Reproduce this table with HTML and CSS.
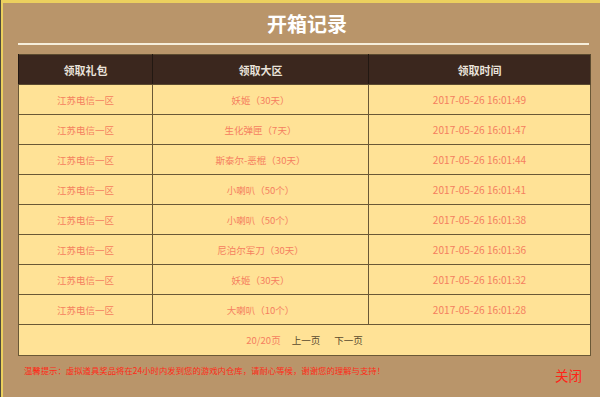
FILE: index.html
```html
<!DOCTYPE html>
<html lang="zh">
<head>
<meta charset="utf-8">
<title>开箱记录</title>
<link rel="stylesheet" href="styles.css">
</head>
<body>
<div class="edge">
  <div class="frame">
    <h1 class="title">开箱记录</h1>
    <div class="rule"></div>
    <table class="records">
      <colgroup><col class="c1"><col class="c2"><col class="c3"></colgroup>
      <thead>
        <tr><th>领取礼包</th><th>领取大区</th><th>领取时间</th></tr>
      </thead>
      <tbody>
        <tr><td>江苏电信一区</td><td>妖姬（30天）</td><td class="time">2017-05-26 16:01:49</td></tr>
        <tr><td>江苏电信一区</td><td>生化弹匣（7天）</td><td class="time">2017-05-26 16:01:47</td></tr>
        <tr><td>江苏电信一区</td><td>斯泰尔-恶棍（30天）</td><td class="time">2017-05-26 16:01:44</td></tr>
        <tr><td>江苏电信一区</td><td>小喇叭（50个）</td><td class="time">2017-05-26 16:01:41</td></tr>
        <tr><td>江苏电信一区</td><td>小喇叭（50个）</td><td class="time">2017-05-26 16:01:38</td></tr>
        <tr><td>江苏电信一区</td><td>尼泊尔军刀（30天）</td><td class="time">2017-05-26 16:01:36</td></tr>
        <tr><td>江苏电信一区</td><td>妖姬（30天）</td><td class="time">2017-05-26 16:01:32</td></tr>
        <tr><td>江苏电信一区</td><td>大喇叭（10个）</td><td class="time">2017-05-26 16:01:28</td></tr>
        <tr class="pager"><td colspan="3"><span class="count">20/20页</span><a class="prev">上一页</a><a class="next">下一页</a></td></tr>
      </tbody>
    </table>
    <div class="footer">
      <p class="note">温馨提示：虚拟道具奖品将在24小时内发到您的游戏内仓库，请耐心等候，谢谢您的理解与支持！</p>
      <a class="close">关闭</a>
    </div>
  </div>
</div>
</body>
</html>
```

FILE: styles.css
```css
html, body {
  margin: 0;
  padding: 0;
  height: 100%;
}
body {
  background: #b9956a;
  font-family: "Noto Sans CJK SC", "Noto Sans", sans-serif;
  overflow: hidden;
}
.edge {
  height: 100%;
  border-left: 1px solid #4e4a3e;
  box-sizing: border-box;
}
.frame {
  height: 100%;
  box-sizing: border-box;
  border-top: 3px solid #ecd05e;
  border-left: 2px solid #ecd05e;
  padding: 7px 10px 0 15px;
  background: #b9956a;
}
.title {
  margin: 0;
  height: 28px;
  line-height: 28px;
  font-size: 20px;
  font-weight: bold;
  color: #ffffff;
  text-align: center;
  padding-left: 6px;
}
.rule {
  height: 2px;
  margin: 5px 1px 0 0;
  background: #f6eedb;
}
.records {
  margin-top: 9px;
  width: 572px;
  border-collapse: collapse;
  table-layout: fixed;
  border: 1px solid #5b4a2f;
}
.c1 { width: 134px; }
.c2 { width: 216px; }
.c3 { width: 222px; }
.records th {
  height: 29px;
  padding: 0;
  background: #3b271e;
  color: #e9e2da;
  font-size: 11px;
  font-weight: bold;
  border-left: 1px solid #221812;
  border-bottom: 1px solid #5b4a2f;
}
.records td {
  height: 29px;
  padding: 0;
  background: #ffe296;
  color: #f5805f;
  font-size: 9.5px;
  text-align: center;
  border: 1px solid #6a5836;
}
.records td.time {
  font-size: 10.1px;
}
.records .pager td {
  height: 30px;
}
.count {
  color: #f5805f;
}
.prev, .next {
  color: #5a4a2e;
  font-size: 9.5px;
}
.prev { margin-left: 11px; }
.next { margin-left: 14px; }
.footer {
  display: flex;
  justify-content: space-between;
  align-items: flex-start;
  padding: 0 8px 0 6px;
}
.note {
  margin: 8px 0 0;
  font-size: 8.4px;
  line-height: 12px;
  color: #ff2a18;
}
.close {
  font-size: 13.5px;
  line-height: 20px;
  color: #ff2418;
  margin-top: 9px;
}
```
